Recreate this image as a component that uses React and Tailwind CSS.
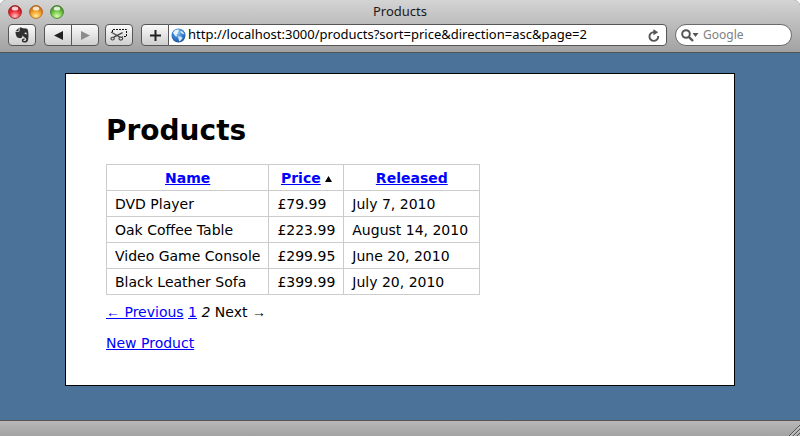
import { useState } from 'react';

const products = [
  { name: 'DVD Player', price: '£79.99', released: 'July 7, 2010' },
  { name: 'Oak Coffee Table', price: '£223.99', released: 'August 14, 2010' },
  { name: 'Video Game Console', price: '£299.95', released: 'June 20, 2010' },
  { name: 'Black Leather Sofa', price: '£399.99', released: 'July 20, 2010' },
];

const button =
  'flex h-[22px] w-7 shrink-0 items-center justify-center border border-[#565656] bg-linear-to-b from-[#fbfbfb] to-[#cfcfcf]';
const cell = 'border border-[#ccc] px-2 pt-[5px] pb-[3px]';
const link = 'text-[#0000ff] underline';

const TrafficLight = ({ label, id, dark, mid, light }) => (
  <button aria-label={label} className="size-[14px]">
    <svg viewBox="0 0 14 14" className="size-full">
      <defs>
        <radialGradient id={id} cx="50%" cy="85%" r="85%">
          <stop offset="0" stopColor={light} />
          <stop offset="0.5" stopColor={mid} />
          <stop offset="1" stopColor={dark} />
        </radialGradient>
      </defs>
      <circle cx="7" cy="7.5" r="6.5" fill="#fff" fillOpacity="0.4" />
      <circle cx="7" cy="7" r="6.4" fill={`url(#${id})`} stroke={dark} strokeWidth="0.9" />
      <ellipse cx="7" cy="3.4" rx="3.2" ry="2" fill="#fff" fillOpacity="0.8" />
    </svg>
  </button>
);

const ElephantIcon = () => (
  <svg viewBox="0 0 14 16" className="h-4 w-[14px]" fill="#303030">
    <path d="M3.7 0.9 L0.7 3.9 H3 Q3.7 3.9 3.7 3.2 Z" />
    <path d="M4.6 0.6 Q6.6 0 7.8 1.2 L11.4 1.6 Q12.8 1.9 13.1 3.8 Q13.9 8 13.2 12.4 Q12.8 15.4 10.4 15.4 H9 Q6.8 15.4 6.8 13.4 Q6.8 11.6 8.8 11.4 H9.6 V12.8 H9 Q8.2 13 8.4 13.6 Q8.6 14.1 9.2 14.1 H10 Q11.3 13.8 11.3 12.2 Q11.3 10.8 9.6 10.4 Q8.4 10.1 7.9 8.8 L7.5 8.8 Q7.5 11.2 5.6 11.3 L3 10.8 Q1.6 10.6 1 8 Q0.4 6 0.5 4.7 H3.4 Q4.6 4.7 4.6 3.4 Z" />
    <path d="M9.5 7 Q9.6 5.4 10.8 5.6 Q11.9 5.8 11.8 7.4 Q10.6 6.8 9.5 7 Z" fill="#e8e8e8" />
  </svg>
);

const ScissorsIcon = () => (
  <svg viewBox="0 0 18 14" className="h-[14px] w-[18px]" fill="none">
    <path d="M2.5 4 V1.5 H16.5 V8.5 H12.5" stroke="#111" strokeWidth="1" strokeDasharray="2 1" />
    <path d="M1 4 L10 9.2 M3.4 9.4 L12.6 4.6" stroke="#444" strokeWidth="1.2" />
    <ellipse cx="2.6" cy="10.6" rx="1.7" ry="1.4" stroke="#444" strokeWidth="1.1" />
    <ellipse cx="10.8" cy="10.6" rx="1.9" ry="1.5" stroke="#444" strokeWidth="1.1" />
  </svg>
);

const GlobeIcon = () => (
  <svg viewBox="0 0 15 15" className="size-[15px] shrink-0">
    <defs>
      <radialGradient id="globe" cx="45%" cy="30%" r="75%">
        <stop offset="0" stopColor="#8cc4f2" />
        <stop offset="0.5" stopColor="#3a82cf" />
        <stop offset="1" stopColor="#174a94" />
      </radialGradient>
    </defs>
    <circle cx="7.5" cy="7.5" r="7" fill="url(#globe)" />
    <path d="M2 4.4 Q4 1.4 7.4 1.6 L8 3 L6.6 4.4 L7 5.6 L5.4 6.6 L6.4 8 L5 8.6 L3.4 6.8 Z" fill="#e6f3fd" />
    <path d="M9.4 2.4 Q12.6 3.6 13.4 6.4 L11.6 5.8 L9.8 4.6 Z" fill="#dceefb" />
    <path d="M6.8 8.2 L10 8.6 L11.6 10 L9.8 12.6 L8.2 13.4 L7.6 11 Z" fill="#cfe6f8" />
  </svg>
);

const ReloadIcon = () => (
  <svg viewBox="0 0 12 13" className="h-[13px] w-3" fill="none">
    <path d="M10.2 7 A4.4 4.4 0 1 1 6 3.1" stroke="#555" strokeWidth="1.9" />
    <path d="M5.4 0.2 L10.2 3.2 L5.4 6.2 Z" fill="#555" />
  </svg>
);

const SearchIcon = () => (
  <svg viewBox="0 0 18 13" className="h-[13px] w-[18px] shrink-0">
    <circle cx="5" cy="5" r="3.8" fill="none" stroke="#555" strokeWidth="2" />
    <path d="M7.8 7.8 L12 12" stroke="#555" strokeWidth="2.4" />
    <path d="M11.5 4 H17.5 L14.5 8 Z" fill="#555" />
  </svg>
);

const Toolbar = () => {
  const [url, setUrl] = useState('http://localhost:3000/products?sort=price&direction=asc&page=2');

  return (
    <div className="flex items-center gap-2 px-2">
      <button aria-label="Clip page" className={`${button} rounded-sm`}>
        <ElephantIcon />
      </button>

      {/* History */}
      <div className="flex">
        <button aria-label="Back" className={`${button} rounded-l-sm`}>
          <svg viewBox="0 0 9 9" className="size-[9px]"><path d="M0 4.5 L9 0 V9 Z" fill="#222" /></svg>
        </button>
        <button aria-label="Forward" className={`${button} -ml-px rounded-r-sm`}>
          <svg viewBox="0 0 9 9" className="size-[9px]"><path d="M9 4.5 L0 0 V9 Z" fill="#8c8c8c" /></svg>
        </button>
      </div>

      <button aria-label="Clip region" className={`${button} -ml-0.5 rounded-sm`}>
        <ScissorsIcon />
      </button>

      {/* Address */}
      <div className="flex min-w-0 flex-1">
        <button aria-label="Add bookmark" className={`${button} rounded-l-sm`}>
          <svg viewBox="0 0 11 11" className="size-[11px]"><path d="M5.5 0 V11 M0 5.5 H11" stroke="#222" strokeWidth="2" /></svg>
        </button>
        <div className="-ml-px flex h-[22px] min-w-0 flex-1 items-center gap-0.5 rounded-r-sm border border-[#565656] bg-white pr-1.5 pl-0.5">
          <GlobeIcon />
          <input
            aria-label="Address"
            value={url}
            onChange={(e) => setUrl(e.target.value)}
            className="min-w-0 flex-1 bg-transparent text-black outline-none"
          />
          <button aria-label="Reload">
            <ReloadIcon />
          </button>
        </div>
      </div>

      <label className="flex h-[22px] w-[117px] items-center gap-1 rounded-full border border-[#6a6a6a] bg-white pl-[5px]">
        <SearchIcon />
        <input aria-label="Search" placeholder="Google" className="w-20 min-w-0 bg-transparent text-xs outline-none placeholder:text-[#808080]" />
      </label>
    </div>
  );
};

const ProductsTable = () => (
  <table className="border-collapse leading-[17px]">
    <thead>
      <tr>
        <th className={cell}><a href="#name" className={link}>Name</a></th>
        <th className={cell}>
          <span className="flex items-center justify-center gap-1">
            <a href="#price" className={link}>Price</a>
            <svg viewBox="0 0 7 6" className="h-1.5 w-[7px]"><path d="M3.5 0 L7 6 H0 Z" /></svg>
          </span>
        </th>
        <th className={`${cell} w-[136px]`}><a href="#released" className={link}>Released</a></th>
      </tr>
    </thead>
    <tbody>
      {products.map((product) => (
        <tr key={product.name}>
          <td className={cell}>{product.name}</td>
          <td className={cell}>{product.price}</td>
          <td className={cell}>{product.released}</td>
        </tr>
      ))}
    </tbody>
  </table>
);

const App = () => (
  <div className="bg-white">
    <div className="flex min-h-screen flex-col overflow-hidden rounded-t-md bg-[#4b7399]">
      <header className="border-b border-[#555] bg-linear-to-b from-[#d4d4d4] to-[#a2a2a2] pb-1.5 font-['Noto_Sans',sans-serif] text-[13px] text-[#1a1a1a]">
        <div className="grid h-6 grid-cols-[1fr_auto_1fr] items-center px-2">
          <div className="flex gap-[7px]">
            <TrafficLight label="Close" id="close" dark="#a3141b" mid="#ee2f3a" light="#ffc9c9" />
            <TrafficLight label="Minimize" id="minimize" dark="#b05c10" mid="#f5a128" light="#fff2a0" />
            <TrafficLight label="Zoom" id="zoom" dark="#3c7d22" mid="#74c74a" light="#dcffb4" />
          </div>
          <span>Products</span>
        </div>
        <Toolbar />
      </header>

      <main className="flex-1 px-2 pb-8 font-['DejaVu_Sans',Verdana,sans-serif] text-sm text-black">
        <div className="mx-auto mt-5 box-content w-3/4 border border-black bg-white px-10 pt-[39px] pb-[33px]">
          <h1 className="mb-[15px] text-[28px] leading-9 font-bold">Products</h1>
          <ProductsTable />
          <p className="mt-2 leading-[18px]">
            <a href="#previous" className={link}><span className="font-['Liberation_Sans',sans-serif]">←</span> Previous</a>{' '}
            <a href="#page-1" className={link}>1</a> <em>2</em>{' '}
            <span>Next <span className="font-['Liberation_Sans',sans-serif]">→</span></span>
          </p>
          <p className="mt-[13px] leading-[18px]">
            <a href="#new" className={link}>New Product</a>
          </p>
        </div>
      </main>

      {/* Status bar */}
      <footer className="flex h-4 items-end justify-end border-t border-[#555] bg-linear-to-b from-[#b8b8b8] to-[#a2a2a2]">
        <svg viewBox="0 0 12 12" className="size-3" fill="none">
          <path d="M1 12 L12 1 M5 12 L12 5 M9 12 L12 9" stroke="#555" />
          <path d="M2 12.4 L12 2.4 M6 12.4 L12 6.4 M10 12.4 L12 10.4" stroke="#ddd" strokeWidth="0.8" />
        </svg>
      </footer>
    </div>
  </div>
);

export default App;
